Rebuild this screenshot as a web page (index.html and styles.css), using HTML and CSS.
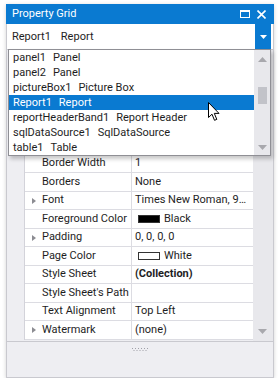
FILE: index.html
```html
<!DOCTYPE html>
<html>
<head>
<meta charset="utf-8">
<link rel="stylesheet" href="styles.css">
</head>
<body>
<div class="panel">
  <div class="titlebar">
    <span class="title">Property Grid</span>
    <div class="title-icons">
      <svg class="ico-max" width="10" height="8" viewBox="0 0 10 8"><rect x="0.5" y="1" width="9" height="6.5" fill="none" stroke="#fff" stroke-width="1"/><rect x="0" y="0" width="10" height="2" fill="#fff"/></svg>
      <svg class="ico-close" width="9" height="9" viewBox="0 0 9 9"><path d="M0.5 0.5 L8.5 8.5 M8.5 0.5 L0.5 8.5" stroke="#fff" stroke-width="1.6"/></svg>
    </div>
  </div>
  <div class="combo">
    <span class="combo-text">Report1<span class="cgap">Report</span></span>
    <div class="dd-btn"><svg width="7" height="4" viewBox="0 0 7 4"><path d="M0 0 H7 L3.5 4 Z" fill="#fff"/></svg></div>
  </div>
  <div class="grid-area">
    <div class="grid">
      <div class="row"><div class="gut"></div><div class="name"></div><div class="val"></div></div>
      <div class="row"><div class="gut"></div><div class="name"></div><div class="val"></div></div>
      <div class="row"><div class="gut"></div><div class="name"></div><div class="val"></div></div>
      <div class="row"><div class="gut"></div><div class="name"></div><div class="val"></div></div>
      <div class="row"><div class="gut"></div><div class="name"></div><div class="val"></div></div>
      <div class="row"><div class="gut"></div><div class="name">Border Width</div><div class="val">1</div></div>
      <div class="row"><div class="gut"></div><div class="name">Borders</div><div class="val">None</div></div>
      <div class="row"><div class="gut"></div><div class="name"><span class="exp"></span>Font</div><div class="val">Times New Roman, 9…</div></div>
      <div class="row"><div class="gut"></div><div class="name">Foreground Color</div><div class="val"><span class="swatch black"></span>Black</div></div>
      <div class="row"><div class="gut"></div><div class="name"><span class="exp"></span>Padding</div><div class="val">0, 0, 0, 0</div></div>
      <div class="row"><div class="gut"></div><div class="name">Page Color</div><div class="val"><span class="swatch white"></span>White</div></div>
      <div class="row"><div class="gut"></div><div class="name">Style Sheet</div><div class="val bold">(Collection)</div></div>
      <div class="row"><div class="gut"></div><div class="name">Style Sheet's Path</div><div class="val"></div></div>
      <div class="row"><div class="gut"></div><div class="name">Text Alignment</div><div class="val">Top Left</div></div>
      <div class="row"><div class="gut"></div><div class="name"><span class="exp"></span>Watermark</div><div class="val">(none)</div></div>
    </div>
    <div class="vscroll">
      <svg class="vs-down" width="9" height="5" viewBox="0 0 9 5"><path d="M0 0 H9 L4.5 5 Z" fill="#a8a8ad"/></svg>
    </div>
  </div>
  <div class="footer">
    <svg class="grip" width="16" height="4" viewBox="0 0 16 4">
      <g fill="#a0a0a8">
        <rect x="0" y="0" width="1" height="1"/><rect x="3" y="0" width="1" height="1"/><rect x="6" y="0" width="1" height="1"/><rect x="9" y="0" width="1" height="1"/><rect x="12" y="0" width="1" height="1"/><rect x="15" y="0" width="1" height="1"/>
        <rect x="1.5" y="2" width="1" height="1"/><rect x="4.5" y="2" width="1" height="1"/><rect x="7.5" y="2" width="1" height="1"/><rect x="10.5" y="2" width="1" height="1"/><rect x="13.5" y="2" width="1" height="1"/>
      </g>
    </svg>
  </div>

  <div class="ddlist">
    <div class="items">
      <div class="item">panel1<span class="gap">Panel</span></div>
      <div class="item">panel2<span class="gap">Panel</span></div>
      <div class="item">pictureBox1<span class="gap">Picture Box</span></div>
      <div class="item sel">Report1<span class="gap">Report</span></div>
      <div class="item">reportHeaderBand1<span class="gap">Report Header</span></div>
      <div class="item">sqlDataSource1<span class="gap">SqlDataSource</span></div>
      <div class="item">table1<span class="gap">Table</span></div>
    </div>
    <div class="lscroll">
      <svg class="ls-up" width="9" height="5" viewBox="0 0 9 5"><path d="M0 5 H9 L4.5 0 Z" fill="#a8a8ad"/></svg>
      <div class="thumb"></div>
      <svg class="ls-down" width="9" height="5" viewBox="0 0 9 5"><path d="M0 0 H9 L4.5 5 Z" fill="#a8a8ad"/></svg>
    </div>
  </div>

  <svg class="cursor" width="13" height="20" viewBox="0 0 13 20"><path d="M0.5 0.5 L0.5 15.5 L4 12.2 L6.5 18.3 L8.8 17.4 L6.3 11.4 L11 11.4 Z" fill="#fff" stroke="#000" stroke-width="1" stroke-linejoin="miter"/></svg>
</div>
</body>
</html>
```
FILE: styles.css
```css
* { box-sizing: border-box; }
body {
  margin: 0;
  background: #ffffff;
  font-family: Roboto, "Noto Sans", sans-serif;
  font-size: 11px;
  color: #1e1e1e;
}
.panel {
  position: relative;
  margin: 4px 0 0 6px;
  width: 268px;
  height: 374px;
  background: #eeeef2;
  border: 1px solid #c9c9cf;
  border-top: none;
  box-shadow: 0 1px 4px rgba(0, 0, 0, 0.18);
  display: flex;
  flex-direction: column;
}
.titlebar {
  height: 20px;
  margin: 0 -1px;
  background: #0a7ad1;
  color: #fff;
  display: flex;
  align-items: center;
  justify-content: space-between;
  padding: 0 8px 0 6px;
  font-size: 11px;
}
.title { line-height: 20px; }
.title-icons { display: flex; align-items: center; gap: 7px; }
.ico-max { display: block; }
.ico-close { display: block; }
.combo {
  height: 26px;
  background: #fff;
  display: flex;
  align-items: stretch;
  justify-content: space-between;
  border-bottom: 1px solid #c9c9cf;
  padding-left: 5px;
}
.combo-text { align-self: center; font-size: 11px; color: #1e1e1e; }
.cgap { margin-left: 10px; }
.gap { margin-left: 7px; }
.dd-btn {
  width: 16px;
  height: 25px;
  margin-right: 2px;
  background: #0a7ad1;
  display: flex;
  align-items: center;
  justify-content: center;
}
.dd-btn svg { display: block; }
.grid-area {
  height: 291px;
  display: flex;
  padding-top: 12px;
}
.grid { width: 246px; }
.row {
  display: grid;
  grid-template-columns: 18px 107px 121px;
  height: 18.5px;
}
.gut { background: #eeeef2; border-right: 1px solid #d3d3da; }
.name, .val {
  background: #fff;
  border-bottom: 1px solid #dcdce2;
  display: flex;
  align-items: center;
  white-space: nowrap;
  overflow: hidden;
  line-height: 18px;
}
.name { padding-left: 17px; border-right: 1px solid #dcdce2; position: relative; }
.val { padding-left: 3px; }
.bold { font-weight: bold; }
.exp {
  position: absolute;
  left: 7px;
  top: 6px;
  width: 0;
  height: 0;
  border-top: 3.5px solid transparent;
  border-bottom: 3.5px solid transparent;
  border-left: 4px solid #8c8c92;
}
.swatch {
  display: inline-block;
  width: 22px;
  height: 8px;
  margin: 0 4px 0 3px;
  border: 1px solid #333;
}
.swatch.black { background: #000; }
.swatch.white { background: #fff; }
.vscroll {
  width: 20px;
  background: #e8e8ec;
  margin-top: -12px;
  position: relative;
}
.vs-down { position: absolute; left: 5px; bottom: 7px; }
.footer {
  flex: 1;
  border-top: 1px solid #c9c9cf;
  display: flex;
  justify-content: center;
  padding-top: 6px;
}
.grip { display: block; }
.ddlist {
  position: absolute;
  left: 1px;
  top: 45px;
  width: 263px;
  height: 107px;
  background: #fff;
  border: 1px solid #8f8f95;
  box-shadow: 2px 3px 4px rgba(0, 0, 0, 0.22);
  display: flex;
}
.items { flex: 1; }
.item {
  height: 15px;
  line-height: 15px;
  padding-left: 4px;
  white-space: nowrap;
  color: #1e1e1e;
}
.item.sel { background: #0a7ad1; color: #fff; }
.lscroll {
  width: 16px;
  background: #e8e8ec;
  position: relative;
}
.ls-up { position: absolute; left: 4px; top: 7px; }
.ls-down { position: absolute; left: 4px; bottom: 5px; }
.thumb {
  position: absolute;
  left: 4px;
  top: 37px;
  width: 9px;
  height: 17px;
  background: #c2c3c9;
}
.cursor { position: absolute; left: 201px; top: 98px; }
```
